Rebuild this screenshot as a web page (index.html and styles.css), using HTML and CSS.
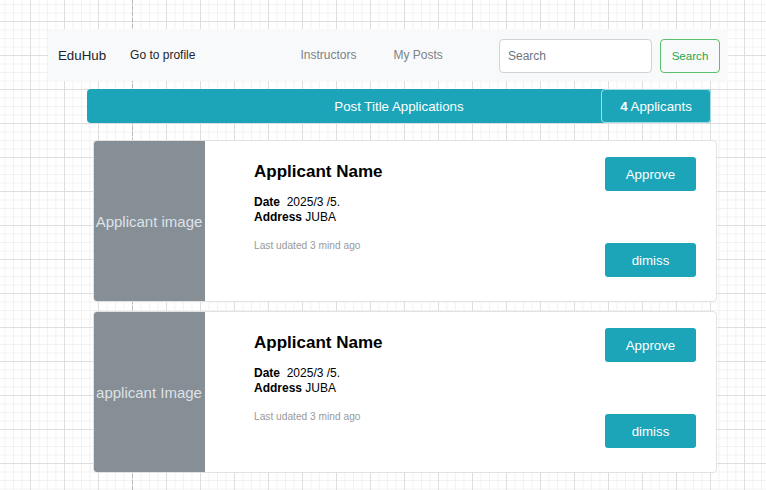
FILE: index.html
```html
<!DOCTYPE html>
<html lang="en">
<head>
<meta charset="utf-8">
<title>EduHub - Applications</title>
<link rel="stylesheet" href="styles.css">
</head>
<body>
  <nav class="navbar">
    <a class="brand" href="#">EduHub</a>
    <a class="nav-profile" href="#">Go to profile</a>
    <a class="nav-link nav-instructors" href="#">Instructors</a>
    <a class="nav-link nav-posts" href="#">My Posts</a>
    <form class="search">
      <input class="search-input" type="search" placeholder="Search">
      <button class="search-btn" type="button">Search</button>
    </form>
  </nav>

  <div class="post-header">
    <span class="spacer"></span>
    <h1 class="post-title">Post Title Applications</h1>
    <span class="count"><span><b>4</b> Applicants</span></span>
  </div>

  <main class="cards">
    <div class="card">
      <div class="card-img">Applicant image</div>
      <div class="card-body">
        <h2 class="name">Applicant Name</h2>
        <p class="meta"><b>Date</b>&nbsp; 2025/3 /5.<br><b>Address</b> JUBA</p>
        <p class="updated">Last udated 3 mind ago</p>
      </div>
      <div class="card-actions">
        <button class="btn" type="button">Approve</button>
        <button class="btn" type="button">dimiss</button>
      </div>
    </div>
    <div class="card">
      <div class="card-img">applicant Image</div>
      <div class="card-body">
        <h2 class="name">Applicant Name</h2>
        <p class="meta"><b>Date</b>&nbsp; 2025/3 /5.<br><b>Address</b> JUBA</p>
        <p class="updated">Last udated 3 mind ago</p>
      </div>
      <div class="card-actions">
        <button class="btn" type="button">Approve</button>
        <button class="btn" type="button">dimiss</button>
      </div>
    </div>
  </main>
</body>
</html>
```

FILE: styles.css
```css
html {
  margin: 0;
  background-color: #ffffff;
  background-image:
    linear-gradient(to bottom, #b8b8b8 4px, transparent 4px),
    linear-gradient(to right, #dedede 1px, transparent 1px),
    linear-gradient(to bottom, #dedede 1px, transparent 1px),
    linear-gradient(to right, #f2f2f2 1px, transparent 1px),
    linear-gradient(to bottom, #f2f2f2 1px, transparent 1px);
  background-size: 1px 6px, 34px 34px, 34px 34px, 8.5px 8.5px, 8.5px 8.5px;
  background-position: 132px 0, 30px 21px, 30px 21px, 30px 21px, 30px 21px;
  background-repeat: repeat-y, repeat, repeat, repeat, repeat;
  min-height: 100%;
}

body {
  margin: 0;
  padding-top: 29px;
  font-family: "Liberation Sans", Arial, sans-serif;
  color: #212529;
}

a { text-decoration: none; }

/* Navbar */
.navbar {
  display: flex;
  align-items: center;
  height: 52px;
  margin-left: 48px;
  width: 680px;
  box-sizing: border-box;
  padding: 0 8px 0 10px;
  background: #f8f9fa;
}

.brand {
  font-size: 13.3px;
  color: #212529;
}

.nav-profile {
  margin-left: 24px;
  font-size: 12px;
  color: #212529;
}

.nav-link {
  font-size: 12px;
  color: #7c8287;
}

.nav-instructors { margin-left: 105px; }
.nav-posts { margin-left: 37px; }

.search {
  display: flex;
  align-items: center;
  gap: 8px;
  margin: 1px 0 0 auto;
}

.search-input {
  box-sizing: border-box;
  width: 153px;
  height: 34px;
  padding: 0 8px;
  border: 1px solid #ced4da;
  border-radius: 4px;
  background: #fff;
  font-family: inherit;
  font-size: 12px;
  color: #495057;
  outline: none;
}

.search-input::placeholder { color: #6c757d; }

.search-btn {
  box-sizing: border-box;
  width: 60px;
  height: 34px;
  padding: 0;
  border: 1px solid #5cbf6c;
  border-radius: 4px;
  background: transparent;
  font-family: inherit;
  font-size: 11.6px;
  color: #28a745;
}

/* Header bar */
.post-header {
  display: grid;
  grid-template-columns: 110px 1fr 110px;
  align-items: stretch;
  margin: 8px 0 0 87px;
  width: 624px;
  height: 34px;
  background: #1ca5b9;
  border-radius: 4px;
  color: #fff;
}

.post-title {
  margin: 0;
  align-self: center;
  text-align: center;
  font-size: 13.3px;
  font-weight: normal;
}

.count {
  display: flex;
  align-items: center;
  justify-content: center;
  box-sizing: border-box;
  border: 1px solid rgba(255, 255, 255, 0.6);
  border-radius: 4px;
  font-size: 13.3px;
}

/* Cards */
.cards {
  display: flex;
  flex-direction: column;
  gap: 9px;
  margin: 17px 0 0 93px;
  width: 624px;
}

.card {
  display: flex;
  flex: 0 0 162px;
  height: 162px;
  box-sizing: border-box;
  border: 1px solid #e2e2e2;
  border-radius: 4px;
  background: #fff;
  overflow: hidden;
}

.card-img {
  flex: 0 0 112px;
  margin: -1px 0 -1px -1px;
  display: flex;
  align-items: center;
  justify-content: center;
  background: #868e96;
  color: #dee2e6;
  font-size: 15px;
  white-space: nowrap;
  border-radius: 4px 0 0 4px;
}

.card-body {
  flex: 1;
  padding: 21px 0 0 49px;
}

.name {
  margin: 0 0 13px;
  font-size: 17px;
  line-height: 20px;
  font-weight: bold;
  color: #000;
}

.meta {
  margin: 0;
  font-size: 12px;
  line-height: 15px;
  color: #000;
}

.updated {
  margin: 15px 0 0;
  font-size: 10.2px;
  line-height: 12px;
  color: #9a9a9a;
}

.card-actions {
  display: flex;
  flex-direction: column;
  justify-content: space-between;
  padding: 16px 20px 24px 0;
}

.btn {
  box-sizing: border-box;
  width: 91px;
  height: 34px;
  padding: 0;
  border: none;
  border-radius: 3px;
  background: #1ca5b9;
  color: #fff;
  font-family: inherit;
  font-size: 13.3px;
}
```
